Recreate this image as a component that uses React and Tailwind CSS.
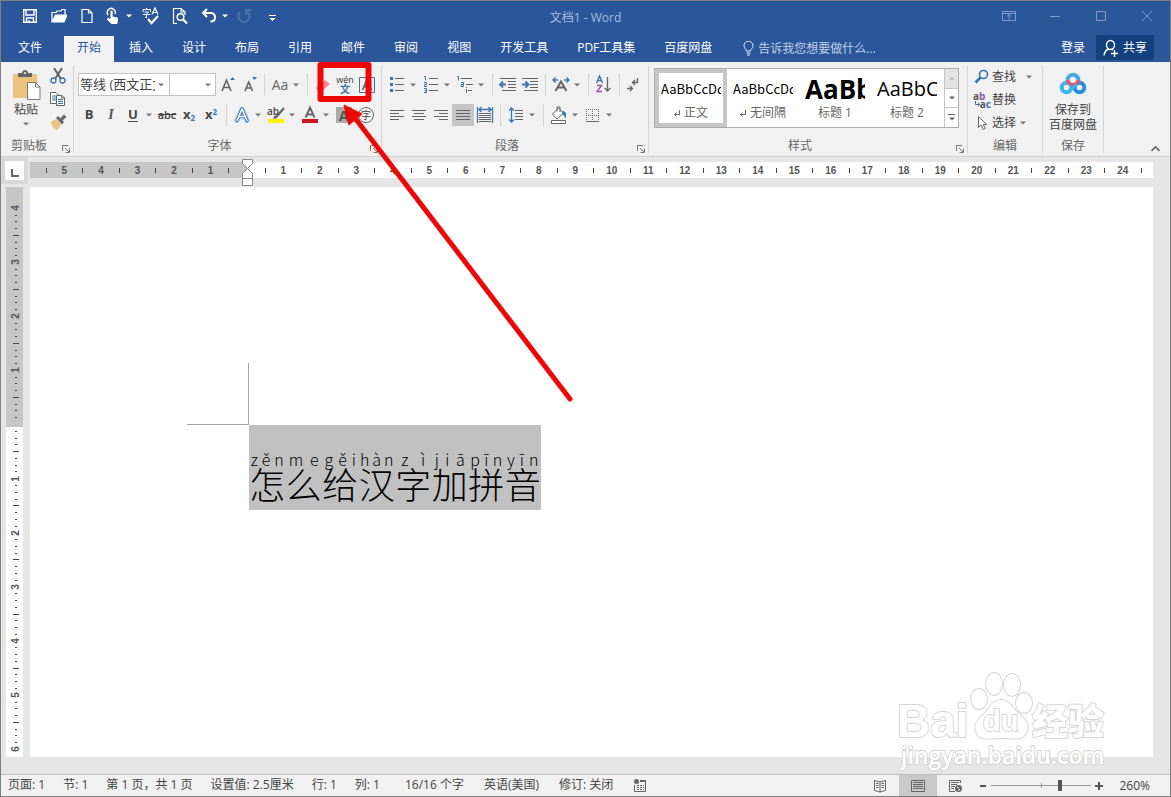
import React, { useState } from 'react';

const GREY = '#646464';
const BLUE = '#3a74ad';

const Svg = ({ size = 22, children, ...rest }) => (
  <svg width={size} height={size} viewBox={`0 0 ${size} ${size}`} fill="none" stroke={GREY} aria-hidden="true" className="shrink-0" {...rest}>
    {children}
  </svg>
);

const Caret = ({ className = '' }) => (
  <svg width="6" height="4" viewBox="0 0 6 4" aria-hidden="true" className={`shrink-0 ${className}`}>
    <path d="M0 .5h6L3 3.5z" fill="currentColor" />
  </svg>
);

const Sep = () => <span className="mx-1 h-[22px] w-px shrink-0 bg-[#d2d2d2]" />;

const Tool = ({ label, active, children }) => (
  <button type="button" aria-label={label} title={label} className={`flex h-[22px] w-[22px] shrink-0 items-center justify-center ${active ? 'bg-[#c5c5c5]' : 'hover:bg-[#dcdcdc]'}`}>
    {children}
  </button>
);

const Drop = ({ label }) => (
  <button type="button" aria-label={label} className="flex h-[22px] w-3 shrink-0 items-center justify-center pr-[3px] text-[#777]">
    <Caret />
  </button>
);

const Group = ({ label, launcher, className, children }) => (
  <section className={`flex shrink-0 flex-col border-r border-[#d4d4d4] ${className}`}>
    <div className="flex-1">{children}</div>
    <div className="relative h-[14px] text-center text-xs leading-[14px] text-[#666]">
      {label}
      {launcher && (
        <button type="button" aria-label={launcher} className="absolute right-[3px] bottom-0">
          <svg width="8" height="8" viewBox="0 0 8 8" fill="none" stroke="#777">
            <path d="M.5 6V.5H6M3 3l4 4M7.5 3.5v4h-4" />
          </svg>
        </button>
      )}
    </div>
  </section>
);

// --- Title bar ---
const QuickAccess = () => (
  <div className="flex items-center pb-1 text-white">
    <button type="button" aria-label="保存" className="ml-[21px]">
      <Svg size={16} stroke="#fff" strokeWidth="1.4">
        <path d="M1.7 1.7h12.6v12.6H1.7zM4 2v5h8V2M4.5 14v-4h7v4M7 12v2" />
      </Svg>
    </button>
    <button type="button" aria-label="打开" className="ml-[13px]">
      <Svg size={16} stroke="#fff" strokeWidth="1.2">
        <path d="M1 13.5V4.5h4l1-1.5h4l1-1.5h3V7" />
        <path d="M1 14 4.5 7H16l-3 7z" fill="#fff" />
      </Svg>
    </button>
    <button type="button" aria-label="新建" className="ml-[12px]">
      <Svg size={16} stroke="#fff" strokeWidth="1.2">
        <path d="M3 1.5h6.5L13 5v9.5H3zM9.5 1.5V5H13" />
      </Svg>
    </button>
    <button type="button" aria-label="触摸/鼠标模式" className="ml-[9px] flex items-center gap-1">
      <Svg size={18} stroke="#fff" strokeWidth="1.4">
        <path d="M4.2 8A4 4 0 1 1 11 7" />
        <path d="M6.500 4.500c0-1.200 2.200-1.200 2.200 0v5l4.300 1c1 .3 1.200 1 1 2L13.300 17H7.500L3 12.500c-.5-1 .8-2 1.800-1.200l1.700 1z" fill="#fff" stroke="none" />
      </Svg>
      <Caret />
    </button>
    <button type="button" aria-label="拼写和语法" className="ml-[9px]">
      <Svg size={20} stroke="#fff">
        <path d="M5.500 2v1.500M2 6V3.500h7.500V6M3.500 6h4L5.500 8v3.500H4M2 8.500h7.500" />
        <path d="M11 8.500 14 2l3 6.500M12 6.500h4" strokeWidth="1.200" />
        <path d="m7 13 3.500 4L17 10" strokeWidth="2.200" />
      </Svg>
    </button>
    <button type="button" aria-label="打印预览" className="ml-[10px]">
      <Svg size={18} stroke="#fff" strokeWidth="1.200">
        <path d="M6 16.500H2.500v-15H10L14 5v3M10 1.500V5h4" />
        <circle cx="9.500" cy="10" r="3.300" strokeWidth="1.500" />
        <path d="m12 12.500 4 4" strokeWidth="2.200" />
      </Svg>
    </button>
    <button type="button" aria-label="撤消" className="ml-[12px] flex items-center gap-[5px]">
      <Svg size={16} stroke="#fff" strokeWidth="2">
        <path d="M6 1 2 5l4 4M2.500 5H10c5.500 0 5.500 8.500-.5 8.500" />
      </Svg>
      <Caret />
    </button>
    <button type="button" aria-label="重复" disabled className="ml-[8px]">
      <Svg size={16} stroke="#4f72ad" strokeWidth="2">
        <path d="M10.500 3A5.700 5.700 0 1 1 4 4M10 7V2h5" />
      </Svg>
    </button>
    <button type="button" aria-label="自定义快速访问工具栏" className="ml-[17px] pt-[3px]">
      <svg width="7" height="8" viewBox="0 0 7 8">
        <path d="M0 1.500h7" stroke="#fff" />
        <path d="M.5 4h6l-3 3z" fill="#fff" />
      </svg>
    </button>
  </div>
);

const TitleBar = () => (
  <header className="grid h-[34px] grid-cols-[1fr_auto_1fr] items-center bg-[#2b579a]">
    <QuickAccess />
    <h1 className="text-xs text-[#a9bcdc]">文档1 - Word</h1>
    <div className="flex items-center justify-end gap-[32px] pr-4 pb-1">
      <button type="button" aria-label="功能区显示选项">
        <Svg size={14} stroke="#7f9cc8">
          <path d="M.5 2.500h13v9H.5zM.5 4.500h13M7 10.500v-5M5 7.500l2-2 2 2" />
        </Svg>
      </button>
      <button type="button" aria-label="最小化">
        <Svg size={14} stroke="#7f9cc8">
          <path d="M2 7.500h10" />
        </Svg>
      </button>
      <button type="button" aria-label="最大化">
        <Svg size={14} stroke="#7f9cc8">
          <path d="M2.500 2.500h9v9h-9z" />
        </Svg>
      </button>
      <button type="button" aria-label="关闭">
        <Svg size={14} stroke="#7f9cc8">
          <path d="m2 2 10 10M12 2 2 12" />
        </Svg>
      </button>
    </div>
  </header>
);

// --- Ribbon tabs ---
const tabs = ['插入', '设计', '布局', '引用', '邮件', '审阅', '视图', '开发工具', 'PDF工具集', '百度网盘'];

const TabBar = () => (
  <nav aria-label="功能区" className="flex h-[27px] bg-[#2b579a] text-xs text-white">
    <button type="button" className="mr-2 ml-[3px] px-[14px] pb-[2px]">文件</button>
    <button type="button" className="mt-px bg-[#f1f1f1] px-[13px] pb-[3px] text-[#2b579a]">开始</button>
    {tabs.map((t) => (
      <button type="button" key={t} className="ml-px px-[14px] pb-[2px]">{t}</button>
    ))}
    <label className="ml-[17px] flex items-center gap-1 text-[#c3d1e8]">
      <svg width="11" height="15" viewBox="0 0 11 15" fill="none" stroke="#e6edf8" aria-hidden="true">
        <path d="M3.500 10c0-2-2.500-2.500-2.500-5.300a4.500 4.500 0 0 1 9 0C10 7.500 7.500 8 7.500 10zM3.500 12h4M4 14h3" />
      </svg>
      <input aria-label="告诉我您想要做什么" placeholder="告诉我您想要做什么..." className="w-[130px] bg-transparent outline-none placeholder:text-[#c3d1e8]" />
    </label>
    <button type="button" className="mr-[11px] ml-auto pb-[2px]">登录</button>
    <button type="button" className="mr-4 mb-[2px] flex w-[58px] items-center justify-center gap-1 bg-[#12417d]">
      <svg width="16" height="18" viewBox="0 0 16 18" fill="none" stroke="#fff" strokeWidth="1.400" aria-hidden="true">
        <ellipse cx="7.500" cy="6" rx="4" ry="4.500" />
        <path d="M1 16.500c.5-3.500 2-5.500 4.500-6.500M8.500 10.200l1.500.8M8 14.500h7M11.500 11v7" />
      </svg>
      共享
    </button>
  </nav>
);

// --- Ribbon groups ---
const Clipboard = () => (
  <Group label={<span className="mr-4">剪贴板</span>} launcher="剪贴板设置" className="w-[73px]">
    <div className="flex pl-[9px]">
      <button type="button" className="flex w-8 flex-col items-center pt-[4px] text-xs text-[#444]">
        <svg width="30" height="30" viewBox="0 0 30 30" aria-hidden="true">
          <path d="M2 4h24v24H2z" fill="#ebc27e" />
          <path d="M7 7V3h4c0-4 6-4 6 0h4v4z" fill="#666" />
          <circle cx="14" cy="3" r="1" fill="#fff" />
          <path d="M16.500 12.500h8l4.500 4.500v12.500H16.500z" fill="#fff" stroke="#777" />
          <path d="M24.500 12.500V17H29" fill="none" stroke="#777" />
        </svg>
        <span className="leading-5">粘贴</span>
        <Caret className="mt-[2px] text-[#777]" />
      </button>
      <div className="ml-[6px] flex flex-col gap-[3px]">
        <button type="button" aria-label="剪切">
          <Svg size={20}>
            <path d="m6 2 7 11M14 2 7 13" strokeWidth="2" />
            <circle cx="5.500" cy="14.500" r="2.500" stroke={BLUE} strokeWidth="1.300" />
            <circle cx="14.500" cy="14.500" r="2.500" stroke={BLUE} strokeWidth="1.300" />
          </Svg>
        </button>
        <button type="button" aria-label="复制">
          <Svg size={20}>
            <path d="M2.500 3.500H8L10.500 6v8.500h-8z" fill="#fff" />
            <path d="M4 7h4M4 9h4M4 11h4" stroke={BLUE} />
            <path d="M8.500 6.500H14L16.500 9v7.500h-8zM13.500 6.500V9h3" fill="#fff" />
            <path d="M10 10.500h5M10 12.500h5M10 14.500h5" stroke={BLUE} />
          </Svg>
        </button>
        <button type="button" aria-label="格式刷">
          <Svg size={20} stroke="none">
            <path d="m3 10 5-3 5 5.500L9 18l-3-1.500L2.500 11z" fill="#ebc27e" />
            <path d="m8 6 2-2 6 6-2 2.500z" fill="#666" />
            <path d="m12 6.500 4-4L18.500 5l-4.500 4z" fill="#666" />
          </Svg>
        </button>
      </div>
    </div>
  </Group>
);

const FontGroup = () => {
  const [font, setFont] = useState('dengxian');
  return (
    <Group label={<span className="mr-4">字体</span>} launcher="字体设置" className="w-[308px]">
      <div className="flex flex-col gap-2 pt-[7px] pl-1">
        <div className="flex h-[23px] items-center">
          <div className="relative shrink-0 text-[#777]">
            <select aria-label="字体" value={font} onChange={(e) => setFont(e.target.value)} className="block h-[23px] w-[92px] appearance-none border border-[#c3c3c3] bg-white pr-[14px] pl-px text-[13px] text-[#444]">
              <option value="dengxian">等线 (西文正文)</option>
            </select>
            <Caret className="pointer-events-none absolute top-[10px] right-[6px]" />
          </div>
          <div className="relative -ml-px shrink-0 text-[#777]">
            <select aria-label="字号" className="block h-[23px] w-[47px] appearance-none border border-[#c3c3c3] bg-white text-[13px]">
              <option> </option>
            </select>
            <Caret className="pointer-events-none absolute top-[10px] right-[5px]" />
          </div>
          <Tool label="增大字号">
            <Svg>
              <path d="m6 17 4.500-11L15 17M7.500 13.500h6" strokeWidth="1.600" />
              <path d="M14 6h5l-2.500-3z" fill={BLUE} stroke="none" />
            </Svg>
          </Tool>
          <Tool label="减小字号">
            <Svg>
              <path d="m7 17 3.700-9 3.800 9M8 14h5" strokeWidth="1.600" />
              <path d="M14 3h5l-2.500 3z" fill={BLUE} stroke="none" />
            </Svg>
          </Tool>
          <Sep />
          <Tool label="更改大小写"><span className="text-sm font-medium text-[#666]">Aa</span></Tool>
          <Drop label="大小写选项" />
          <Sep />
          <Tool label="清除所有格式">
            <Svg stroke="none">
              <path d="m6 13 7-7 5 4-8 7z" fill="#f0889a" />
              <path d="m4 14 3-3 5 4-2 2H6z" fill="#b9a3bd" />
            </Svg>
          </Tool>
          <Tool label="拼音指南">
            <span className="flex flex-col items-center">
              <span className="text-[9px] leading-[9px] text-[#333]">wén</span>
              <span className="text-[10px] leading-[10px] font-bold text-[#3a74ad]">文</span>
            </span>
          </Tool>
          <Tool label="字符边框">
            <Svg>
              <path d="M3.500 3.500h15v15h-15z" stroke={BLUE} />
              <path d="M6.500 16 11 5.500 15.500 16M8 12.500h6" strokeWidth="1.800" />
            </Svg>
          </Tool>
        </div>
        <div className="flex items-center">
          <Tool label="加粗"><span className="text-[13px] font-bold text-[#444]">B</span></Tool>
          <Tool label="倾斜"><span className="font-['Liberation_Serif',serif] text-sm font-bold text-[#555] italic">I</span></Tool>
          <Tool label="下划线"><span className="text-[13px] font-bold text-[#444] underline underline-offset-2">U</span></Tool>
          <Drop label="下划线选项" />
          <Tool label="删除线"><span className="text-[11px] font-semibold text-[#444] line-through">abc</span></Tool>
          <Tool label="下标"><span className="text-[13px] font-bold text-[#444]">x<sub className="text-[8px] text-[#3a74ad]">2</sub></span></Tool>
          <Tool label="上标"><span className="text-[13px] font-bold text-[#444]">x<sup className="text-[8px] text-[#3a74ad]">2</sup></span></Tool>
          <Sep />
          <Tool label="文本效果">
            <Svg strokeLinejoin="round" strokeLinecap="round">
              <path d="m6 16.500 5-11.500 5 11.500M8 12.500h6" stroke="#b5d1ee" strokeWidth="5.500" />
              <path d="m6 16.500 5-11.500 5 11.500M8 12.500h6" stroke={BLUE} strokeWidth="3.200" />
              <path d="m6 16.500 5-11.500 5 11.500M8 12.500h6" stroke="#fff" strokeWidth="1.500" />
            </Svg>
          </Tool>
          <Drop label="文本效果选项" />
          <Tool label="突出显示">
            <span className="relative">
              <Svg>
                <path d="m19 4-6 7-3 3" strokeWidth="2.200" />
                <path d="m8 15 1.500-3.500L12 14z" fill={GREY} stroke="none" />
                <path d="M3 15h16v4H3z" fill="#fff200" stroke="none" />
              </Svg>
              <span className="absolute top-[2px] left-[2px] text-[10px] leading-[10px] font-semibold text-[#444]">ab</span>
            </span>
          </Tool>
          <Drop label="突出显示颜色" />
          <Tool label="字体颜色">
            <Svg>
              <path d="m6.500 13.500 4.500-10 4.500 10M8 10.500h6" strokeWidth="1.900" />
              <path d="M3 15h16v4H3z" fill="#c8141a" stroke="none" />
            </Svg>
          </Tool>
          <Drop label="字体颜色选项" />
          <Tool label="字符底纹">
            <span className="flex h-4 w-4 items-center justify-center bg-[#aaa] text-[15px] leading-[16px] font-bold text-[#555]">A</span>
          </Tool>
          <Tool label="带圈字符">
            <span className="flex h-4 w-4 shrink-0 items-center justify-center rounded-full border border-[#666] text-[10px] leading-[14px] text-[#444]">字</span>
          </Tool>
        </div>
      </div>
    </Group>
  );
};

const alignments = [
  ['左对齐', 'M4 6.500h14M4 9.500h9M4 12.500h14M4 15.500h9'],
  ['居中', 'M4 6.500h14M6 9.500h10M4 12.500h14M6 15.500h10'],
  ['右对齐', 'M4 6.500h14M9 9.500h9M4 12.500h14M9 15.500h9'],
  ['两端对齐', 'M4 6.500h14M4 9.500h14M4 12.500h14M4 15.500h14'],
];

const ParagraphGroup = () => (
  <Group label={<span className="mr-4">段落</span>} launcher="段落设置" className="w-[267px]">
    <div className="flex flex-col gap-2 pt-[7px] pl-1">
      <div className="flex h-[23px] items-center">
        <Tool label="项目符号">
          <Svg>
            <path d="M9 4.500h9M9 10.500h9M9 16.500h9" />
            <path d="M4 3h3v3H4zM4 9h3v3H4zM4 15h3v3H4z" fill={BLUE} stroke="none" />
          </Svg>
        </Tool>
        <Drop label="项目符号选项" />
        <Tool label="编号">
          <Svg>
            <path d="M9 4.500h9M9 10.500h9M9 16.500h9" />
            <path d="M4 2.500h1.500v4M4 8.500h2.500v2h-2v2H7M4 14.500h2.500v4H4M4.500 16.500h2" stroke={BLUE} />
          </Svg>
        </Tool>
        <Drop label="编号选项" />
        <Tool label="多级列表">
          <Svg>
            <path d="M7 4.500h11M12 10.500h7M14 16.500h4" />
            <path d="M3 2.500h1.500v4M7 8.500h2.500v4H7v-2h2M12.500 15v4M12.500 13v1" stroke={BLUE} />
          </Svg>
        </Tool>
        <Drop label="多级列表选项" />
        <Sep />
        <Tool label="减少缩进量">
          <Svg>
            <path d="M3 4.500h16M11 7.500h8M11 10.500h8M11 13.500h8M5 16.500h14" />
            <path d="M3 10.500h6M6 7.500l-3 3 3 3" stroke={BLUE} strokeWidth="1.800" />
          </Svg>
        </Tool>
        <Tool label="增加缩进量">
          <Svg>
            <path d="M3 4.500h16M11 7.500h8M11 10.500h8M11 13.500h8M5 16.500h14" />
            <path d="M3 10.500h6M6.500 7.500l3 3-3 3" stroke={BLUE} strokeWidth="1.800" />
          </Svg>
        </Tool>
        <Sep />
        <Tool label="中文版式">
          <Svg>
            <path d="M5.500 17 11 7.500l5.500 9.500M8 13.500h6" strokeWidth="2" />
            <path d="M3 6h5M5.500 3.500 3 6l2.500 2.500M14 6h5M16.500 3.500 19 6l-2.500 2.500" stroke={BLUE} strokeWidth="1.400" />
          </Svg>
        </Tool>
        <Drop label="中文版式选项" />
        <Sep />
        <Tool label="排序">
          <Svg>
            <path d="m3.500 9 3-7 3 7M4.500 6.500h4" stroke={BLUE} strokeWidth="1.400" />
            <path d="M4 11.500h4.500L4 17.500h5" stroke="#9a4fa6" strokeWidth="1.400" />
            <path d="M14.500 3v14M11.500 14l3 3 3-3" strokeWidth="1.300" />
          </Svg>
        </Tool>
        <Sep />
        <Tool label="显示编辑标记">
          <Svg>
            <path d="M13.500 4v4.500h-5M11 6l-2.500 2.500L11 11M3 14.500h5M6 12l2.500 2.500L6 17" strokeWidth="1.400" />
          </Svg>
        </Tool>
      </div>
      <div className="flex items-center">
        {alignments.map(([name, d]) => (
          <Tool key={name} label={name} active={name === '两端对齐'}>
            <Svg><path d={d} /></Svg>
          </Tool>
        ))}
        <Tool label="分散对齐">
          <Svg>
            <path d="M3.500 3v16M18.500 3v16M5 5.500h12M7.500 3 5 5.500 7.500 8M14.500 3 17 5.500 14.500 8" stroke={BLUE} strokeWidth="1.300" />
            <path d="M5 9.500h12M5 11.500h12M5 13.500h12M5 15.500h12M5 17.500h12" />
          </Svg>
        </Tool>
        <Sep />
        <Tool label="行和段落间距">
          <Svg>
            <path d="M10 6.500h8M10 9.500h8M10 12.500h8M10 15.500h8" />
            <path d="M6.500 4v14M4 6.500 6.500 4 9 6.500M4 15.500 6.500 18 9 15.500" stroke={BLUE} strokeWidth="1.300" />
          </Svg>
        </Tool>
        <Drop label="间距选项" />
        <Sep />
        <Tool label="底纹">
          <Svg>
            <path d="m4.500 10 6-6 5 5-6.500 6z" fill="#fff" />
            <path d="M9 7.500V3h3v5" />
            <path d="M14 7c4 0 5 3 3.500 8-.5-2-1-4-3.500-5z" fill={BLUE} stroke="none" />
            <path d="M3.500 16.500h14v3h-14z" fill="#fff" />
          </Svg>
        </Tool>
        <Drop label="底纹颜色" />
        <Tool label="边框">
          <Svg strokeDasharray="1 1">
            <path d="M4 5.500h13M4 11.500h13M4.500 5v12M10.500 5v12M16.500 5v12" />
            <path d="M4 17.500h13" strokeDasharray="none" />
          </Svg>
        </Tool>
        <Drop label="边框选项" />
      </div>
    </div>
  </Group>
);

const styleCards = [
  { name: '正文', mark: true, sample: 'AaBbCcDd', cls: "text-[13px] font-['Noto_Sans_CJK_SC',sans-serif]" },
  { name: '无间隔', mark: true, sample: 'AaBbCcDd', cls: "text-[13px] font-['Noto_Sans_CJK_SC',sans-serif]" },
  { name: '标题 1', sample: 'AaBbC', cls: 'text-[26px] font-bold' },
  { name: '标题 2', sample: 'AaBbC', cls: 'text-[20px]' },
];

const StylesGroup = () => (
  <Group label={<span className="mr-4">样式</span>} launcher="样式设置" className="w-[319px]">
    <div className="mt-[2px] ml-[5px] flex h-[60px] w-[305px] border border-[#ababab] bg-white">
      {styleCards.map((s, i) => (
        <button type="button" key={s.name} className={`flex w-[72px] shrink-0 flex-col border-4 px-[2px] ${i === 0 ? 'border-[#c6c6c6]' : 'border-transparent'}`}>
          <span className={`flex h-8 w-full items-center overflow-hidden whitespace-nowrap text-black ${s.cls}`}>{s.sample}</span>
          <span className="flex w-full items-center justify-center gap-1 text-xs leading-4 text-[#666]">
            {s.mark && (
              <svg width="6" height="7" viewBox="0 0 6 7" fill="none" stroke="#666" aria-hidden="true">
                <path d="M5.500 0v4.500h-5M2.500 2.500l-2 2 2 2" />
              </svg>
            )}
            {s.name}
          </span>
        </button>
      ))}
      <div className="ml-auto flex w-[14px] flex-col divide-y divide-[#c6c6c6] border-l border-[#c6c6c6] text-[#666]">
        <button type="button" aria-label="上一行" className="flex flex-1 items-center justify-center bg-[#e4e4e4] text-[#bbb]"><Caret className="rotate-180" /></button>
        <button type="button" aria-label="下一行" className="flex flex-1 items-center justify-center"><Caret /></button>
        <button type="button" aria-label="其他样式" className="flex flex-1 flex-col items-center justify-center gap-[2px]">
          <span className="h-px w-[7px] bg-[#666]" />
          <Caret />
        </button>
      </div>
    </div>
  </Group>
);

const EditGroup = () => (
  <Group label="编辑" className="w-[75px]">
    <div className="flex flex-col gap-[3px] pt-px pl-[4px] text-xs text-[#444]">
      <button type="button" className="flex h-5 items-center">
        <Svg size={20}>
          <circle cx="11.500" cy="7.500" r="4" stroke={BLUE} strokeWidth="1.600" />
          <path d="m8.500 10.500-5 5" stroke={BLUE} strokeWidth="2.600" />
        </Svg>
        查找
        <Caret className="ml-[10px] text-[#777]" />
      </button>
      <button type="button" className="flex h-5 items-center">
        <span className="flex w-5 flex-col pr-px text-[10px] leading-[8px] font-bold" aria-hidden="true">
          <span className="pl-px text-left text-[#555]">a<span className="text-[#8e5aa8]">b</span></span>
          <span className="flex items-center justify-end text-[#555]">
            <svg width="5" height="6" viewBox="0 0 5 6" fill="none" stroke={BLUE}><path d="M.5 0v3.500h4M3 1.500l1.500 2L3 5.500" /></svg>
            a<span className="text-[#3a74ad]">c</span>
          </span>
        </span>
        替换
      </button>
      <button type="button" className="flex h-5 items-center">
        <Svg size={20}>
          <path d="M6.500 3.500v11l2.700-2.500 2 4.500 2-1-2-4h3.500z" fill="#fff" />
        </Svg>
        选择
        <Caret className="ml-1 text-[#777]" />
      </button>
    </div>
  </Group>
);

const SaveGroup = () => (
  <Group label="保存" className="w-[61px]">
    <button type="button" className="flex w-full flex-col items-center pt-[4px] text-xs leading-[15px] text-[#444]">
      <svg width="28" height="26" viewBox="0 0 28 26" fill="none" strokeWidth="4" aria-hidden="true" className="mb-[6px]">
        <circle cx="7.500" cy="17.500" r="4.800" stroke="#3cb4ec" />
        <circle cx="20.500" cy="17.500" r="4.800" stroke="#2a8de0" />
        <path d="M8.500 11.500a5.600 5.600 0 1 1 11 0" stroke="#45a8e0" />
        <path d="M8.500 10a5.600 5.600 0 0 0 11 0" stroke="#e9556f" strokeWidth="3.500" />
        <path d="m10.500 20.500 7-6" stroke="#3cb4ec" strokeWidth="3" />
      </svg>
      <span>保存到</span>
      <span className="whitespace-nowrap">百度网盘</span>
    </button>
  </Group>
);

const Ribbon = () => (
  <div className="flex h-[95px] border-b border-[#d2d2d2] bg-[#f1f1f1] pt-1 pb-[3px]">
    <Clipboard />
    <FontGroup />
    <ParagraphGroup />
    <StylesGroup />
    <EditGroup />
    <SaveGroup />
    <button type="button" aria-label="折叠功能区" className="mr-[10px] ml-auto self-end">
      <svg width="9" height="8" viewBox="0 0 9 8" fill="none" stroke="#666" strokeWidth="1.600"><path d="m.5 6 4-4 4 4" /></svg>
    </button>
  </div>
);

// --- Rulers: cells alternate between a half mark and a number ---
const leftCells = Array.from({ length: 11 }, (_, i) => (i % 2 ? String(5 - (i - 1) / 2) : ''));
const rightCells = Array.from({ length: 49 }, (_, i) => (i % 2 ? String((i + 1) / 2) : ''));

const HCells = ({ cells }) =>
  cells.map((c, i) => (
    <span key={i} className="flex min-w-0 flex-1 basis-0 items-center justify-center">
      {c || <i className="h-[5px] w-px bg-[#444]" />}
    </span>
  ));

const HRuler = () => (
  <div className="flex h-[30px] bg-[#e6e6e6]">
    <button type="button" aria-label="制表符" className="flex h-[27px] w-[27px] items-center justify-center border-4 border-[#d9d9d9] bg-white pt-1">
      <svg width="8" height="8" viewBox="0 0 8 8" fill="none" stroke="#666" strokeWidth="2"><path d="M1 0v7h7" /></svg>
    </button>
    <div className="relative mt-[5px] mr-[17px] ml-[2px] flex h-4 flex-1 font-['Liberation_Sans',Arial,sans-serif] text-[10px] font-bold text-[#555]">
      <div className="flex w-[217px] shrink-0 bg-[#c6c6c6] pr-[9px] pl-[7px]"><HCells cells={leftCells} /></div>
      <div className="flex min-w-0 flex-1 bg-white pr-[3px] pl-[9px]"><HCells cells={rightCells} /></div>
      <svg width="11" height="29" viewBox="0 0 11 29" fill="#fff" stroke="#888" className="absolute -top-[3px] left-[212px]" aria-hidden="true">
        <path d="M.5.500h10v4l-5 5-5-5zM5.500 9.500l5 5v5H.5v-5zM.5 19.500h10v7H.5z" />
      </svg>
    </div>
  </div>
);

const topCells = Array.from({ length: 32 }, (_, i) => (i % 8 === 0 ? 4 - i / 8 : i % 8 === 4 ? '-' : '.'));
const bottomCells = Array.from({ length: 48 }, (_, i) => ((i + 1) % 8 === 0 ? (i + 1) / 8 : (i + 1) % 8 === 4 ? '-' : '.'));

const VCells = ({ cells }) =>
  cells.map((c, i) => (
    <span key={i} className="flex min-h-0 flex-1 basis-0 items-center justify-center pl-[3px]">
      {c === '-' ? <i className="h-px w-[6px] bg-[#444]" /> : c === '.' ? <i className="h-px w-[2px] bg-[#444]" /> : <b className="-rotate-90 leading-none">{c}</b>}
    </span>
  ));

const VRuler = () => (
  <div className="ml-[5px] flex w-[17px] shrink-0 flex-col font-['Liberation_Sans',Arial,sans-serif] text-[10px] text-[#555]">
    <div className="flex h-[240px] flex-col bg-[#c6c6c6] pt-[18px] pb-[6px]"><VCells cells={topCells} /></div>
    <div className="flex flex-1 flex-col bg-white pt-px pb-[4px]"><VCells cells={bottomCells} /></div>
  </div>
);

// --- Document ---
const words = [
  ['怎', 'zěn'], ['么', 'me'], ['给', 'gěi'], ['汉', 'hàn'], ['字', 'zì'], ['加', 'jiā'], ['拼', 'pīn'], ['音', 'yīn'],
];

const Page = () => (
  <main className="mr-[17px] ml-[7px] flex-1 bg-white pt-[176px] pl-[157px]">
    <div className="h-[62px] w-[62px] border-r border-b border-[#a5a5a5]" />
    <div className="ml-[62px] flex h-[85px] w-[292px] bg-[#c0c0c0] pt-[24px] font-['Noto_Sans_CJK_SC',sans-serif] font-light text-black">
      {words.map(([han, pinyin]) => (
        <div key={han} className="flex flex-1 basis-0 flex-col items-center">
          <span className="flex w-full justify-around text-[16px] leading-[20px]">
            {pinyin.split('').map((ch, i) => <span key={i}>{ch}</span>)}
          </span>
          <span className="text-[36px] leading-[28px]">{han}</span>
        </div>
      ))}
    </div>
  </main>
);

const Watermark = () => (
  <svg width="214" height="104" viewBox="0 0 214 104" className="pointer-events-none absolute right-[58px] bottom-[25px]" fill="#fff" stroke="#d6d6d6" strokeWidth="2" paintOrder="stroke" strokeLinejoin="round" aria-label="Baidu 经验">
    <ellipse cx="81" cy="32" rx="8" ry="10" />
    <ellipse cx="96" cy="17" rx="8" ry="11" />
    <ellipse cx="114" cy="18" rx="8" ry="11" />
    <ellipse cx="126" cy="36" rx="8" ry="10" />
    <path d="M103 33c9 0 11 8 17 13 8 6 12 13 8 20-4 8-13 5-25 5s-20 3-24-4c-4-8 0-14 7-20 6-6 8-14 17-14z" />
    <text x="-1" y="70" fontFamily="Liberation Sans, Arial, sans-serif" fontWeight="700" fontSize="46">Bai</text>
    <text x="85" y="64" fontFamily="Liberation Sans, Arial, sans-serif" fontWeight="700" fontSize="29">du</text>
    <text x="134" y="68" fontFamily="Noto Sans CJK SC, sans-serif" fontWeight="900" fontSize="36">经验</text>
    <text x="3" y="97" fontFamily="Open Sans, sans-serif" fontWeight="600" fontSize="23">jingyan.baidu.com</text>
  </svg>
);

// --- Status bar ---
const StatusBar = () => (
  <footer className="flex h-[22px] items-center border-t border-[#c0c0c0] bg-[#f1f1f1] pb-[2px] pl-[7px] text-xs whitespace-nowrap text-[#444]">
    <div className="flex items-center gap-[18px]">
      <span>页面: 1</span>
      <span>节: 1</span>
      <span>第 1 页，共 1 页</span>
      <span>设置值: 2.5厘米</span>
      <span>行: 1</span>
      <span>列: 1</span>
    </div>
    <div className="ml-[25px] flex items-center gap-5">
      <span>16/16 个字</span>
      <span>英语(美国)</span>
      <span>修订: 关闭</span>
      <button type="button" aria-label="宏录制">
        <Svg size={14}>
          <circle cx="3.500" cy="3.500" r="2.500" fill={GREY} stroke="none" />
          <path d="M7 2.500h6M7 3.500h6M1.500 7v6.500h11V4" />
          <path d="M4 7.500h7M4 9.500h7M4 11.500h7" strokeDasharray="2 1" />
        </Svg>
      </button>
    </div>
    <div className="-mb-[2px] ml-auto flex items-center self-stretch">
      <button type="button" aria-label="阅读视图" className="flex w-[38px] justify-center">
        <Svg size={14}>
          <path d="M7 3 1.500 1.500v10L7 13l5.500-1.500v-10zM7 3v10M3 4.500h2.500M3 6.500h2.500M3 8.500h2.500M8.500 4.500H11M8.500 6.500H11M8.500 8.500H11" />
        </Svg>
      </button>
      <button type="button" aria-label="页面视图" className="flex w-[38px] items-center justify-center self-stretch bg-[#c9c9c9]">
        <Svg size={14}>
          <path d="M.5 1.500h13v11H.5zM2 3.500h10M2 5.500h10M2 7.500h10M2 9.500h10" />
        </Svg>
      </button>
      <button type="button" aria-label="Web 版式视图" className="flex w-[38px] justify-center">
        <Svg size={14}>
          <path d="M11.500 4V1.500H.5v11H6M2 3.500h8M2 5.500h6M2 7.500h4M2 9.500h3" />
          <circle cx="9.500" cy="9.500" r="3.500" fill={GREY} stroke="none" />
          <path d="m8 8 2 1M9 12l2-2" stroke="#fff" />
        </Svg>
      </button>
      <button type="button" aria-label="缩小" className="flex w-4 justify-center"><span className="h-[2px] w-[6px] bg-[#555]" /></button>
      <input
        type="range"
        min="0"
        max="100"
        defaultValue="70"
        aria-label="显示比例"
        className="h-3 w-[100px] appearance-none bg-[linear-gradient(#999,#999),linear-gradient(#999,#999)] bg-[length:100%_1px,1px_5px] bg-center bg-no-repeat [&::-webkit-slider-thumb]:h-[11px] [&::-webkit-slider-thumb]:w-1 [&::-webkit-slider-thumb]:appearance-none [&::-webkit-slider-thumb]:bg-[#555]"
      />
      <button type="button" aria-label="放大" className="flex w-4 justify-center">
        <svg width="8" height="8" viewBox="0 0 8 8" stroke="#555" strokeWidth="2"><path d="M0 4h8M4 0v8" /></svg>
      </button>
      <span className="mr-5 ml-[10px] w-[33px] text-right">260%</span>
    </div>
  </footer>
);

const Callout = () => (
  <svg width="270" height="350" viewBox="0 0 270 350" fill="none" stroke="#ee0707" className="pointer-events-none absolute top-[57px] left-[309px]" aria-hidden="true">
    <rect x="10.500" y="7" width="48" height="34" strokeWidth="6" strokeLinejoin="round" />
    <path d="m45 60 215 281" strokeWidth="5" strokeLinecap="round" />
    <path d="m34 47 18 9-13 11z" fill="#ee0707" strokeLinejoin="round" />
  </svg>
);

const App = () => (
  <div className="relative flex min-h-screen flex-col border border-[#7f7f7f] bg-[#e6e6e6] font-['Open_Sans','Noto_Sans_CJK_SC',sans-serif]">
    <TitleBar />
    <TabBar />
    <Ribbon />
    <HRuler />
    <div className="relative mb-[17px] flex flex-1">
      <VRuler />
      <Page />
    </div>
    <StatusBar />
    <Watermark />
    <Callout />
  </div>
);

export default App;
